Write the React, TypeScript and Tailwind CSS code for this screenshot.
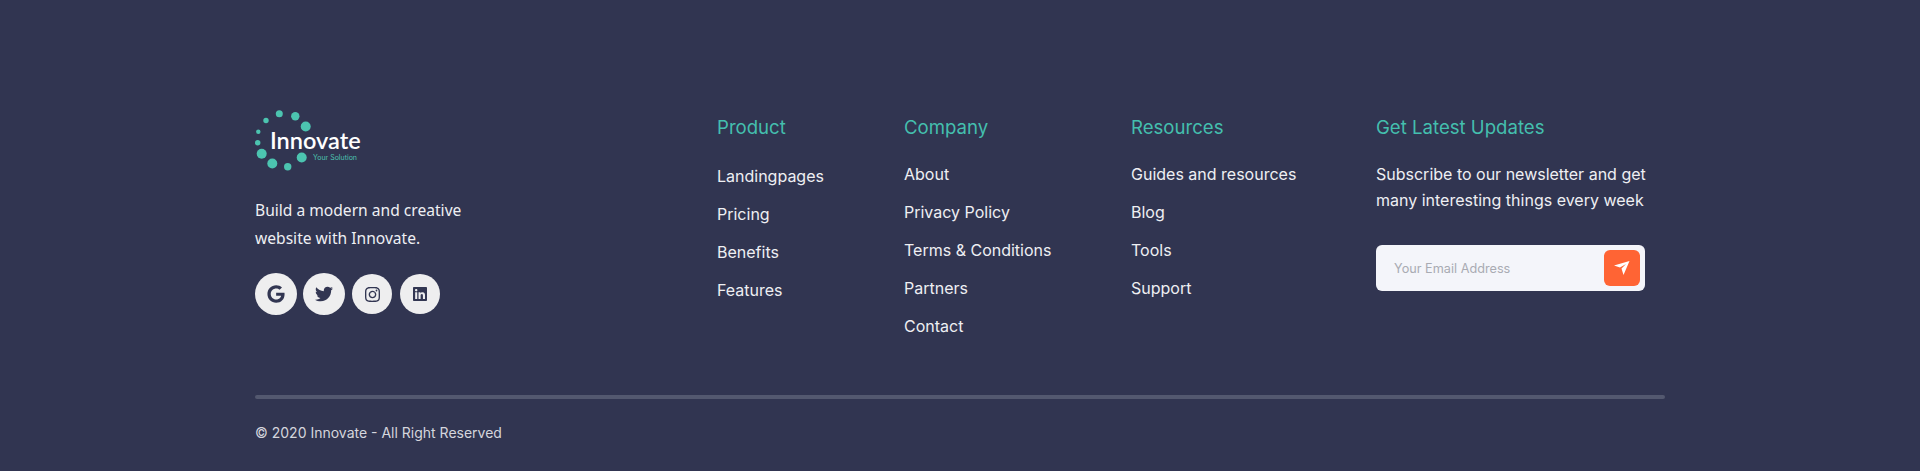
import { FaGoogle, FaTwitter, FaLinkedin } from "react-icons/fa";
import { SiInstagram } from "react-icons/si";

function Logo() {
  const dots = [
    [39.3, 3.8, 3.5],
    [55.3, 6.2, 4.2],
    [65.7, 16.5, 5],
    [26, 10.5, 2.7],
    [18.3, 21.8, 2.2],
    [17.7, 32.8, 2.7],
    [21.7, 43.8, 5],
    [32.3, 53.5, 5],
    [47.7, 56.8, 3.7],
    [61.7, 47.5, 5],
  ];
  return (
    <div className="relative h-[62px] w-[120px]">
      <svg width="90" height="62" viewBox="0 0 90 62" className="absolute left-[-15px] top-0">
        {dots.map(([cx, cy, r], i) => (
          <circle key={i} cx={cx} cy={cy} r={r} fill="#4cc4b0" />
        ))}
      </svg>
      <span className="absolute left-[15px] top-[15px] font-['Lato'] text-[23.5px] font-semibold leading-[30px] text-white">Innovate</span>
      <span className="absolute left-[58px] top-[43px] font-['Inter'] text-[7px] leading-[10px] text-[#4cc4b0]">Your Solution</span>
    </div>
  );
}

function LinkColumn({ title, links, className, listClass }: any) {
  return (
    <div className={className}>
      <h4 className="text-[18.6px] font-normal leading-[24px] text-[#44bfae]">{title}</h4>
      <ul className={listClass}>
        {links.map((l: string) => (
          <li key={l} className="text-base leading-[24px] text-[#eeeff3]">{l}</li>
        ))}
      </ul>
    </div>
  );
}

export default function App() {
  return (
    <div className="h-[471px] bg-[#313551] pl-[255px] font-['Inter',sans-serif]">
      <div className="flex h-[395px] pt-[110px]">
        <div className="w-[462px]">
          <Logo />
          <p className="mt-[24px] w-[240px] font-['Noto_Sans',sans-serif] text-[15.6px] leading-[28px] text-[#eeeff3]">
            Build a modern and creative website with Innovate.
          </p>
          <div className="mt-[21px] flex items-center">
            <span className="flex h-[42px] w-[42px] items-center justify-center rounded-full bg-[#eeeeef] text-[#323652]"><FaGoogle size={18} /></span>
            <span className="ml-[6px] flex h-[42px] w-[42px] items-center justify-center rounded-full bg-[#eeeeef] text-[#323652]"><FaTwitter size={18} /></span>
            <span className="ml-[7px] flex h-[40px] w-[40px] items-center justify-center rounded-full bg-[#eeeeef] text-[#323652]"><SiInstagram size={15} /></span>
            <span className="ml-[8px] flex h-[40px] w-[40px] items-center justify-center rounded-full bg-[#eeeeef] text-[#323652]"><FaLinkedin size={16} /></span>
          </div>
        </div>
        <LinkColumn
          className="w-[187px] pt-[5px]"
          title="Product"
          listClass="mt-[25px] flex flex-col gap-[14px]"
          links={["Landingpages", "Pricing", "Benefits", "Features"]}
        />
        <LinkColumn
          className="w-[227px] pt-[5px]"
          title="Company"
          listClass="mt-[23px] flex flex-col gap-[14px]"
          links={["About", "Privacy Policy", "Terms & Conditions", "Partners", "Contact"]}
        />
        <LinkColumn
          className="w-[245px] pt-[5px]"
          title="Resources"
          listClass="mt-[23px] flex flex-col gap-[14px]"
          links={["Guides and resources", "Blog", "Tools", "Support"]}
        />
        <div className="w-[269px] pt-[5px]">
          <h4 className="whitespace-nowrap text-[18.6px] font-normal leading-[24px] text-[#44bfae]">Get Latest Updates</h4>
          <p className="mt-[22px] whitespace-nowrap text-base leading-[26px] text-[#eeeff3]">
            Subscribe to our newsletter and get<br />many interesting things every week
          </p>
          <div className="mt-[32px] flex h-[46px] items-center justify-between rounded-[6px] bg-[#f4f5fa] pl-[18px] pr-[5px]">
            <span className="pt-[2px] font-['Inter',sans-serif] text-[12.7px] text-[#a9abb3]">Your Email Address</span>
            <button className="flex h-[36px] w-[36px] items-center justify-center rounded-[6px] bg-[#ff6434]">
              <svg width="16" height="14" viewBox="0 0 16 14" fill="#fff">
                <path d="M0 4.5 15.5 0 9.5 14 7.5 7.5 12 3 6 6.5z" />
              </svg>
            </button>
          </div>
        </div>
      </div>
      <div className="h-[4px] w-[1410px] rounded-full bg-[#53586f]" />
      <p className="mt-[24px] text-sm leading-[20px] text-[#d5d6dd]">© 2020 Innovate - All Right Reserved</p>
    </div>
  );
}
